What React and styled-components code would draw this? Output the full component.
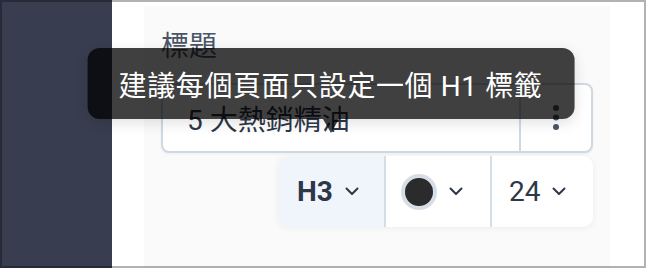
import React from "react";
import styled, { createGlobalStyle } from "styled-components";

const GlobalStyle = createGlobalStyle`
  html, body { margin: 0; padding: 0; }
  body {
    width: 646px;
    height: 268px;
    overflow: hidden;
    font-family: Roboto, "Noto Sans CJK TC", sans-serif;
  }
`;

const Frame = styled.div`
  position: relative;
  width: 646px;
  height: 268px;
  display: flex;
  background: #ffffff;
  &::after {
    content: "";
    position: absolute;
    inset: 0;
    border: 2px solid rgba(0, 0, 0, 0.3);
    pointer-events: none;
  }
`;

const Sidebar = styled.aside`
  width: 112px;
  flex-shrink: 0;
  background: #383e4f;
`;

const Main = styled.main`
  flex: 1;
  display: flex;
  padding: 6px 36px 0 32px;
  background: #ffffff;
`;

const Panel = styled.section`
  flex: 1;
  display: flex;
  flex-direction: column;
  background: #fafafa;
  padding: 21px 17px 0 17px;
`;

const Label = styled.div`
  font-size: 28px;
  line-height: 39px;
  color: #4a5568;
  margin-bottom: 17px;
`;

const Field = styled.div`
  display: flex;
  height: 70px;
  box-sizing: border-box;
  border: 2px solid #cfd9e4;
  border-radius: 8px;
  background: #ffffff;
  box-shadow: 0 1px 3px rgba(0, 0, 0, 0.05);
`;

const FieldText = styled.div`
  flex: 1;
  display: flex;
  align-items: center;
  padding-left: 24px;
  font-size: 28px;
  color: #2d3748;
`;

const KebabButton = styled.div`
  width: 70px;
  border-left: 2px solid #cfd9e4;
  display: flex;
  align-items: center;
  justify-content: center;
  color: #4a5568;
`;

const Toolbar = styled.div`
  align-self: flex-end;
  margin-top: 3px;
  display: flex;
  height: 71px;
  background: #ffffff;
  border-radius: 10px;
  box-shadow: 0 1px 6px rgba(0, 0, 0, 0.06);
`;

const Segment = styled.div`
  position: relative;
  display: flex;
  align-items: center;
  gap: 12px;
  box-sizing: border-box;
  width: ${(p) => p.$width}px;
  padding-left: ${(p) => p.$pad}px;
  background: ${(p) => (p.$active ? "#f0f5fc" : "transparent")};
  border-left: ${(p) => (p.$first ? "none" : "2px solid #d5dee8")};
  border-radius: ${(p) => (p.$first ? "10px 0 0 10px" : "0")};
  color: #2d3748;
  font-size: 28px;
`;

const LevelText = styled.span`
  font-weight: 700;
`;

const SizeText = styled.span`
  font-weight: 400;
`;

const ColorDot = styled.span`
  width: 36px;
  height: 36px;
  box-sizing: border-box;
  border-radius: 50%;
  background: #2b2b2b;
  border: 4px solid #d5dde7;
`;

const Tooltip = styled.div`
  position: absolute;
  bottom: calc(100% + 37px);
  left: 50%;
  transform: translateX(-50%);
  z-index: 10;
  height: 71px;
  box-sizing: border-box;
  display: flex;
  align-items: center;
  padding: 0 32px 0 31px;
  white-space: nowrap;
  background: rgba(0, 0, 0, 0.75);
  color: #ffffff;
  font-size: 28px;
  font-weight: 400;
  letter-spacing: 0.6px;
  border-radius: 12px;
  box-shadow: 0 4px 14px rgba(0, 0, 0, 0.12);
  &::after {
    content: "";
    position: absolute;
    top: 100%;
    left: 50%;
    width: 16px;
    height: 14px;
    transform: translateX(-50%);
    background: rgba(0, 0, 0, 0.75);
    clip-path: polygon(0 0, 100% 0, 50% 100%);
  }
`;

const Chevron = () => (
  <svg width="14" height="9" viewBox="0 0 14 9" aria-hidden="true">
    <path
      d="M1.5 1.5 L7 7 L12.5 1.5"
      fill="none"
      stroke="currentColor"
      strokeWidth="2"
      strokeLinecap="round"
      strokeLinejoin="round"
    />
  </svg>
);

const Kebab = () => (
  <svg width="8" height="28" viewBox="0 0 8 28" aria-hidden="true">
    <circle cx="4" cy="4" r="3" fill="currentColor" />
    <circle cx="4" cy="13.5" r="3" fill="currentColor" />
    <circle cx="4" cy="23" r="3" fill="currentColor" />
  </svg>
);

export default function App() {
  return (
    <>
      <GlobalStyle />
      <Frame>
        <Sidebar />
        <Main>
          <Panel>
            <Label>標題</Label>
            <Field>
              <FieldText>5 大熱銷精油</FieldText>
              <KebabButton>
                <Kebab />
              </KebabButton>
            </Field>
            <Toolbar>
              <Segment $first $active $width={106} $pad={19}>
                <Tooltip>建議每個頁面只設定一個 H1 標籤</Tooltip>
                <LevelText>H3</LevelText>
                <Chevron />
              </Segment>
              <Segment $width={106} $pad={15}>
                <ColorDot />
                <Chevron />
              </Segment>
              <Segment $width={103} $pad={17}>
                <SizeText>24</SizeText>
                <Chevron />
              </Segment>
            </Toolbar>
          </Panel>
        </Main>
      </Frame>
    </>
  );
}
